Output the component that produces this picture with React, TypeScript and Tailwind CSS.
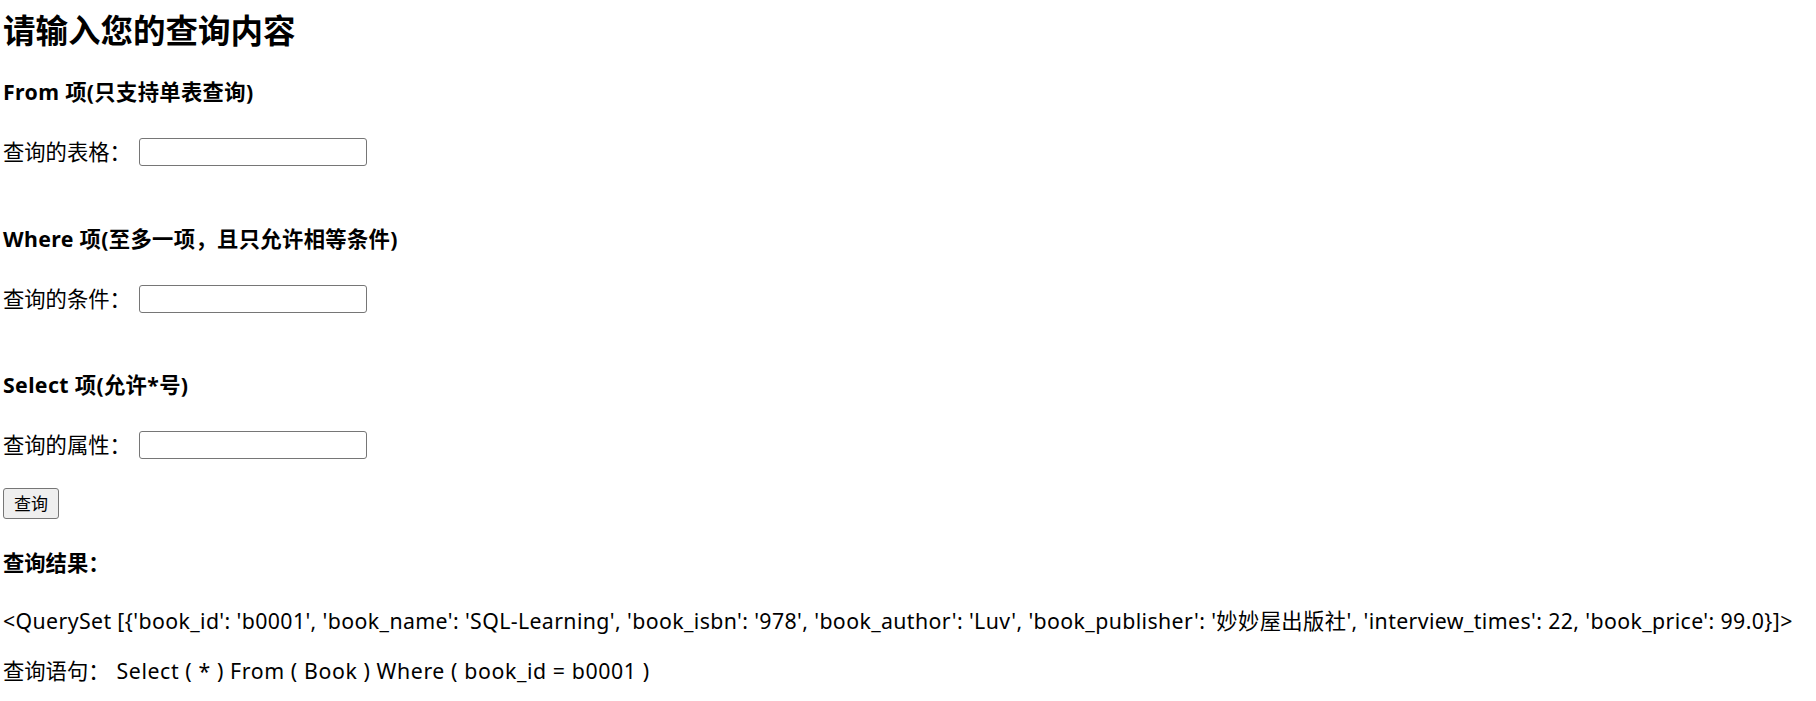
import React from "react";

const font = "font-['Noto_Sans','Noto_Sans_CJK_SC',sans-serif]";

const Field: React.FC<{ label: string }> = ({ label }) => (
  <div className="flex items-center h-[30px]">
    <span className="text-[21.3px] leading-[30px]">{label}</span>
    <input
      type="text"
      className="ml-[8px] w-[228px] h-[28px] border border-[#767676] rounded-[3px] bg-white outline-none"
    />
  </div>
);

export default function App() {
  return (
    <div className={`${font} text-black bg-white min-h-[701px] pl-[3px] pt-[16px] flex flex-col items-start`}>
      <h2 className="h-[30px] leading-[30px] text-[32.5px] font-bold">请输入您的查询内容</h2>

      <h4 className="mt-[31px] h-[30px] leading-[30px] text-[21.3px] font-bold tracking-[0.35px]">From 项(只支持单表查询)</h4>
      <div className="mt-[30px]">
        <Field label="查询的表格：" />
      </div>

      <h4 className="mt-[57px] h-[30px] leading-[30px] text-[21.3px] font-bold tracking-[0.35px]">Where 项(至多一项，且只允许相等条件)</h4>
      <div className="mt-[30px]">
        <Field label="查询的条件：" />
      </div>

      <h4 className="mt-[56px] h-[30px] leading-[30px] text-[21.3px] font-bold tracking-[0.35px]">Select 项(允许*号)</h4>
      <div className="mt-[30px]">
        <Field label="查询的属性：" />
      </div>

      <button className="mt-[28px] w-[56px] h-[31px] bg-[#efefef] border border-[#767676] rounded-[3px] text-[17px] leading-none">
        查询
      </button>

      <h4 className="mt-[29px] h-[30px] leading-[30px] text-[21.3px] font-bold">查询结果：</h4>

      <p className="mt-[28px] h-[30px] leading-[30px] text-[21.3px] whitespace-nowrap tracking-[0.38px]">
        &lt;QuerySet [{"{"}'book_id': 'b0001', 'book_name': 'SQL-Learning', 'book_isbn': '978', 'book_author': 'Luv', 'book_publisher': '妙妙屋出版社', 'interview_times': 22, 'book_price': 99.0{"}"}]&gt;
      </p>

      <p className="mt-[20px] h-[30px] leading-[30px] text-[21.3px] whitespace-pre">
        <span>查询语句：</span>
        <span className="pl-[7px] tracking-[0.6px]">Select ( * ) From ( Book ) Where ( book_id = b0001 )</span>
      </p>
    </div>
  );
}
